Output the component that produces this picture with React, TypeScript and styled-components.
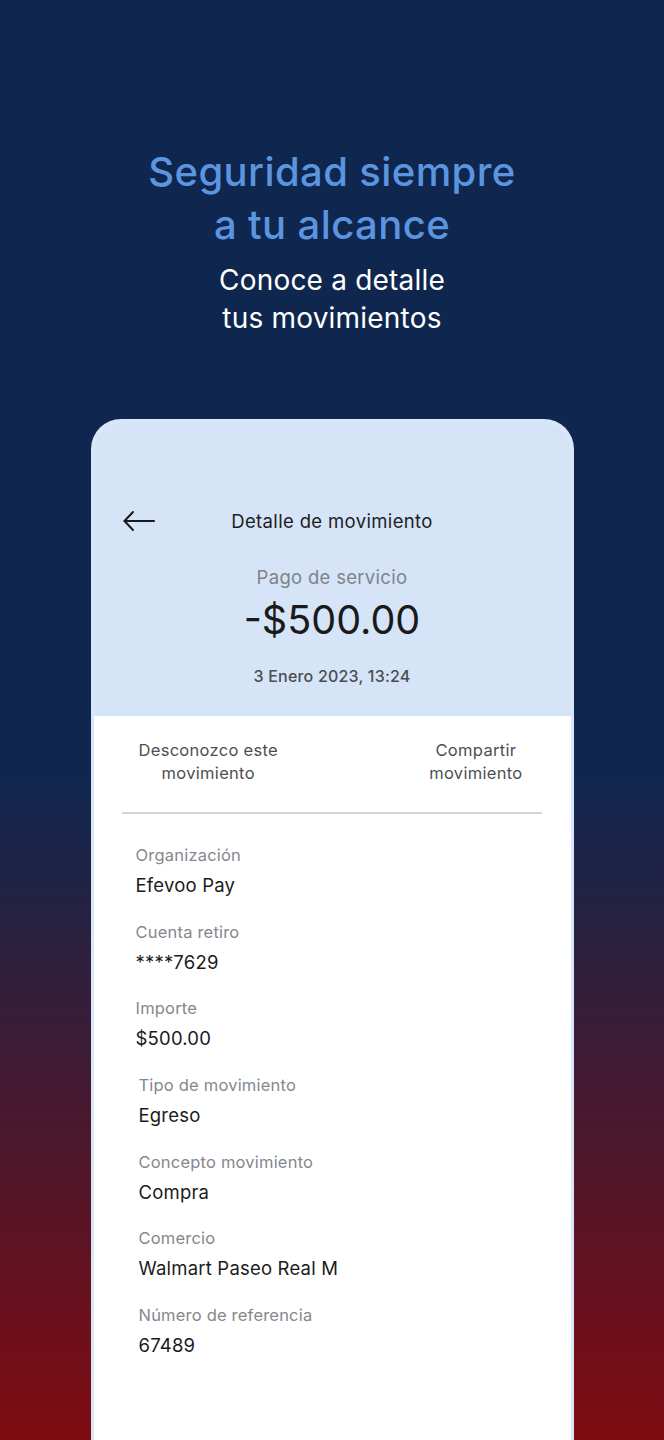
import React from "react";
import styled, { createGlobalStyle } from "styled-components";

const Global = createGlobalStyle`
  html, body { margin: 0; padding: 0; }
  body { font-family: Inter, "Noto Sans", sans-serif; -webkit-font-smoothing: antialiased; }
  * { box-sizing: border-box; }
`;

const Page = styled.div`
  width: 664px;
  height: 1440px;
  overflow: hidden;
  background: linear-gradient(180deg, #0f274e 0%, #0f274e 54%, #7f0b11 100%);
  display: flex;
  flex-direction: column;
  align-items: center;
  padding-top: 145px;
`;

const Title = styled.h1`
  margin: 0;
  font-family: Inter, sans-serif;
  font-weight: 500;
  font-size: 40px;
  line-height: 53px;
  color: #5b95e0;
  text-align: center;
  letter-spacing: 0.4px;
`;

const Subtitle = styled.p`
  margin: 10px 0 0;
  font-family: Inter, sans-serif;
  font-weight: 400;
  font-size: 28px;
  line-height: 38px;
  color: #ffffff;
  text-align: center;
  letter-spacing: 0.2px;
`;

const Card = styled.div`
  margin-top: 82px;
  width: 483px;
  flex: 1 0 auto;
  min-height: 1100px;
  background: #ffffff;
  border: 3px solid #d9e6f9;
  border-bottom: none;
  border-radius: 30px 30px 0 0;
  overflow: hidden;
  display: flex;
  flex-direction: column;
`;

const Header = styled.div`
  background: #d5e4f7;
  padding: 81px 0 30px;
  display: flex;
  flex-direction: column;
  align-items: center;
`;

const NavRow = styled.div`
  width: 100%;
  height: 36px;
  display: grid;
  grid-template-columns: 1fr auto 1fr;
  align-items: center;
  padding: 0 29px;
`;

const BackButton = styled.button`
  justify-self: start;
  background: none;
  border: none;
  padding: 0;
  width: 32px;
  height: 24px;
  display: flex;
  align-items: center;
  cursor: pointer;
`;

const NavTitle = styled.div`
  font-size: 18.5px;
  line-height: 24px;
  font-weight: 400;
  color: #1d1d1f;
  letter-spacing: 0.35px;
`;

const Kind = styled.div`
  margin-top: 26px;
  font-size: 18.5px;
  line-height: 24px;
  color: #7f838a;
  letter-spacing: 0.3px;
`;

const Amount = styled.div`
  margin-top: 7px;
  font-size: 39.5px;
  line-height: 48px;
  font-weight: 400;
  color: #1a1a1a;
  letter-spacing: 0px;
`;

const DateText = styled.div`
  margin-top: 22px;
  font-size: 16px;
  line-height: 20px;
  color: #4a4d51;
  font-weight: 500;
  letter-spacing: 0.2px;
`;

const Actions = styled.div`
  display: flex;
  justify-content: space-between;
  padding: 23px 48px 0 45px;
`;

const ActionButton = styled.button`
  background: none;
  border: none;
  padding: 0;
  font-family: Inter, sans-serif;
  font-size: 16.5px;
  line-height: 23px;
  font-weight: 400;
  color: #4d4f52;
  text-align: center;
  letter-spacing: 0.3px;
  cursor: pointer;
`;

const Divider = styled.hr`
  margin: 27px 29px 0 28px;
  border: none;
  height: 2px;
  background: #d4d4d4;
`;

const Fields = styled.div`
  padding: 30px 0 0;
  display: flex;
  flex-direction: column;
  gap: 22.7px;
`;

const Field = styled.div<{ $indent: number }>`
  padding-left: ${(p) => p.$indent}px;
  display: flex;
  flex-direction: column;
  gap: 6px;
`;

const Label = styled.div`
  font-size: 16.5px;
  line-height: 22px;
  color: #85888d;
  letter-spacing: 0.2px;
`;

const Value = styled.div`
  font-size: 18.5px;
  line-height: 26px;
  color: #1b1b1b;
  letter-spacing: 0.2px;
`;

const fields = [
  { label: "Organización", value: "Efevoo Pay", indent: 42 },
  { label: "Cuenta retiro", value: "****7629", indent: 42 },
  { label: "Importe", value: "$500.00", indent: 42 },
  { label: "Tipo de movimiento", value: "Egreso", indent: 45 },
  { label: "Concepto movimiento", value: "Compra", indent: 45 },
  { label: "Comercio", value: "Walmart Paseo Real M", indent: 45 },
  { label: "Número de referencia", value: "67489", indent: 45 },
];

const ArrowLeft = () => (
  <svg width="32" height="22" viewBox="0 0 32 22" fill="none">
    <path d="M1.5 11H31" stroke="#1a1a1a" strokeWidth="2" strokeLinecap="round" />
    <path d="M10 2L1.5 11L10 20" stroke="#1a1a1a" strokeWidth="2" strokeLinecap="round" strokeLinejoin="round" />
  </svg>
);

export default function App() {
  return (
    <>
      <Global />
      <Page>
        <Title>
          Seguridad siempre
          <br />a tu alcance
        </Title>
        <Subtitle>
          Conoce a detalle
          <br />
          tus movimientos
        </Subtitle>
        <Card>
          <Header>
            <NavRow>
              <BackButton aria-label="Regresar">
                <ArrowLeft />
              </BackButton>
              <NavTitle>Detalle de movimiento</NavTitle>
              <span />
            </NavRow>
            <Kind>Pago de servicio</Kind>
            <Amount>-$500.00</Amount>
            <DateText>3 Enero 2023, 13:24</DateText>
          </Header>
          <Actions>
            <ActionButton>
              Desconozco este
              <br />
              movimiento
            </ActionButton>
            <ActionButton>
              Compartir
              <br />
              movimiento
            </ActionButton>
          </Actions>
          <Divider />
          <Fields>
            {fields.map((f) => (
              <Field key={f.label} $indent={f.indent}>
                <Label>{f.label}</Label>
                <Value>{f.value}</Value>
              </Field>
            ))}
          </Fields>
        </Card>
      </Page>
    </>
  );
}
